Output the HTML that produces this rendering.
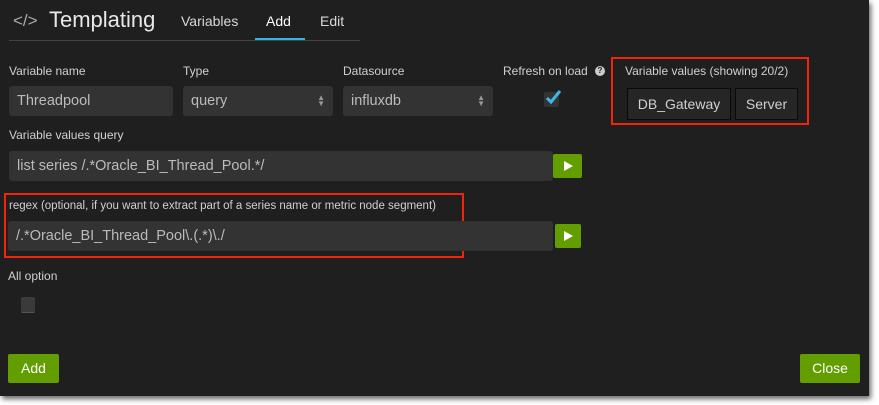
<!DOCTYPE html>
<html><head><style>
body{margin:0;width:879px;height:405px;background:#fff;position:relative;overflow:hidden;font-family:"Liberation Sans",sans-serif;}
#p{position:absolute;left:0;top:0;width:869px;height:396px;background:#1f1f1f;box-shadow:2px 3px 5px rgba(0,0,0,.6);}
.a{position:absolute;white-space:nowrap;}
.l{font-size:12px;color:#d0d0d0;}
.in{position:absolute;background:#333;border-radius:3px;color:#bbb;font-size:14.5px;box-sizing:border-box;padding-left:8px;display:flex;align-items:center;}
.g{position:absolute;background:#629e00;border-radius:2px;}
.red{position:absolute;border:2px solid #f2240c;box-sizing:border-box;}
.tri{position:absolute;width:0;height:0;border-left:9px solid #fff;border-top:5.5px solid transparent;border-bottom:5.5px solid transparent;}
.vb{position:absolute;background:#262626;border:1px solid #0a0a0a;box-sizing:border-box;color:#d0d0d0;font-size:14px;display:flex;align-items:center;justify-content:center;}
.arr{position:absolute;right:8px;top:9px;font-size:8px;color:#999;line-height:6px;}
</style></head><body><div id="p">
<div class="a" style="left:13px;top:11px;font-size:17px;color:#aaa;">&lt;/&gt;</div>
<div class="a" style="left:49px;top:7px;font-size:22px;color:#e8e8e8;">Templating</div>
<div class="a" style="left:181px;top:13px;font-size:14px;color:#d8d8d8;">Variables</div>
<div class="a" style="left:266px;top:13px;font-size:14px;color:#fff;">Add</div>
<div class="a" style="left:320px;top:13px;font-size:14px;color:#d8d8d8;">Edit</div>
<div class="a" style="left:9px;top:40px;width:351px;height:1px;background:#444;"></div>
<div class="a" style="left:255px;top:38px;width:50px;height:2px;background:#33b5e5;"></div>

<div class="a l" style="left:9px;top:64px;">Variable name</div>
<div class="a l" style="left:183px;top:64px;">Type</div>
<div class="a l" style="left:343px;top:64px;">Datasource</div>
<div class="a l" style="left:503px;top:64px;">Refresh on load</div>
<div class="a" style="left:595px;top:66px;width:10px;height:10px;border-radius:50%;background:#ccc;color:#1f1f1f;font-size:8px;font-weight:bold;text-align:center;line-height:10px;">?</div>
<div class="in" style="left:9px;top:86px;width:164px;height:30px;">Threadpool</div>
<div class="in" style="left:183px;top:86px;width:150px;height:30px;">query<span class="arr">▲<br>▼</span></div>
<div class="in" style="left:343px;top:86px;width:150px;height:30px;">influxdb<span class="arr">▲<br>▼</span></div>
<div class="a" style="left:544px;top:92px;width:15px;height:15px;background:#333;border-radius:2px;"></div>
<svg class="a" style="left:544px;top:88px" width="18" height="18"><path d="M3 10 L7 14 L16 3" stroke="#3bb7e8" stroke-width="3" fill="none"/></svg>

<div class="red" style="left:611px;top:57px;width:198px;height:68px;"></div>
<div class="a l" style="left:625px;top:64px;">Variable values (showing 20/2)</div>
<div class="vb" style="left:627px;top:88px;width:104px;height:32px;">DB_Gateway</div>
<div class="vb" style="left:735px;top:88px;width:63px;height:32px;">Server</div>

<div class="a l" style="left:9px;top:128px;">Variable values query</div>
<div class="in" style="left:9px;top:151px;width:544px;height:30px;">list series /.*Oracle_BI_Thread_Pool.*/</div>
<div class="g" style="left:553px;top:154px;width:29px;height:24px;"><div class="tri" style="left:11px;top:7px;"></div></div>

<div class="red" style="left:4px;top:193px;width:460px;height:65px;"></div>
<div class="a" style="left:9px;top:200px;font-size:11.5px;color:#d0d0d0;">regex (optional, if you want to extract part of a series name or metric node segment)</div>
<div class="in" style="left:8px;top:221px;width:545px;height:30px;">/.*Oracle_BI_Thread_Pool\.(.*)\./</div>
<div class="g" style="left:555px;top:224px;width:26px;height:24px;"><div class="tri" style="left:9px;top:7px;"></div></div>

<div class="a l" style="left:8px;top:269px;">All option</div>
<div class="a" style="left:21px;top:297px;width:14px;height:15px;background:#3a3a3a;border-radius:2px;border-bottom:1px solid #555;"></div>

<div class="g" style="left:8px;top:354px;width:51px;height:29px;color:#fff;font-size:14px;text-align:center;line-height:29px;">Add</div>
<div class="g" style="left:800px;top:354px;width:60px;height:29px;color:#fff;font-size:14px;text-align:center;line-height:29px;">Close</div>
</div></body></html>
